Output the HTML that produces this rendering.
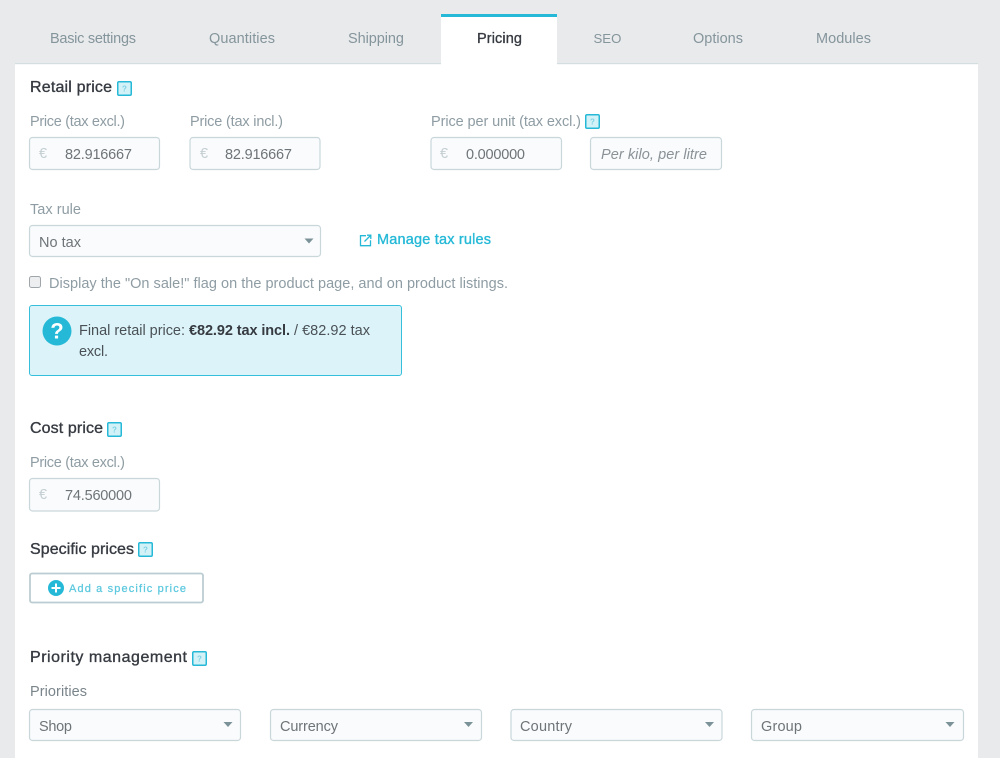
<!DOCTYPE html>
<html><head><meta charset="utf-8"><title>Pricing</title>
<style>
html,body{margin:0;padding:0;width:1000px;height:758px;overflow:hidden;background:#e9eaec}
svg{display:block;filter:blur(.3px)}
text{font-family:"Liberation Sans",sans-serif;font-size:14.5px;fill:#8a9aa0}
.tab{fill:#84959c}
.h{font-size:16px;fill:#363a41;stroke:#363a41;stroke-width:.35px}
.l{fill:#8e9ca3}
.v{fill:#6f7478}
.e{fill:#c3ced2}
.box{fill:#f9fbfc;stroke:#c9d7db;stroke-width:1.2}
.arr{fill:#7b9299}
.a{fill:#4a5156}
</style></head><body>
<svg width="1000" height="758" viewBox="0 0 1000 758" xmlns="http://www.w3.org/2000/svg">
<defs>
<g id="q"><rect x=".75" y=".75" width="13.5" height="13.5" rx="1.2" fill="#d3f2f8" stroke="#25b9d7" stroke-width="1.5"/><text x="7.5" y="10.500" text-anchor="middle" style="font-size:8px;fill:#7fd2e4;font-weight:bold">?</text></g>
</defs>
<rect x="15" y="64" width="963" height="694" fill="#fff"/>
<rect x="15" y="63" width="963" height="1.2" fill="#d3dee1"/>
<rect x="441" y="14" width="116" height="51" fill="#fff"/>
<rect x="441" y="14" width="116" height="3" fill="#25b9d7"/>

<text class="tab" x="50" y="43" textLength="86">Basic settings</text>
<text class="tab" x="209" y="43" textLength="66">Quantities</text>
<text class="tab" x="348" y="43" textLength="56">Shipping</text>
<text x="477" y="43" textLength="45" style="fill:#363a41;stroke:#363a41;stroke-width:.35px">Pricing</text>
<text class="tab" x="593.500" y="43" style="font-size:13.200px">SEO</text>
<text class="tab" x="693" y="43" textLength="50">Options</text>
<text class="tab" x="816" y="43" textLength="55">Modules</text>

<text class="h" x="30" y="92" textLength="82">Retail price</text>
<use href="#q" x="117" y="81"/>
<text class="l" x="30" y="126" textLength="95">Price (tax excl.)</text>
<text class="l" x="190" y="126" textLength="93">Price (tax incl.)</text>
<text class="l" x="431" y="126" textLength="150">Price per unit (tax excl.)</text>
<use href="#q" x="585" y="114"/>

<rect class="box" x="29.500" y="137.500" width="130" height="32" rx="3"/>
<text class="e" x="39" y="158" textLength="8">€</text>
<text class="v" x="65" y="159" textLength="67">82.916667</text>
<rect class="box" x="190" y="137.500" width="130" height="32" rx="3"/>
<text class="e" x="200" y="158" textLength="8">€</text>
<text class="v" x="225" y="159" textLength="67">82.916667</text>
<rect class="box" x="431" y="137.500" width="130.500" height="32" rx="3"/>
<text class="e" x="440" y="158" textLength="8">€</text>
<text class="v" x="466" y="159" textLength="59">0.000000</text>
<rect class="box" x="590.500" y="137.500" width="131" height="32" rx="3"/>
<text x="601" y="159" textLength="106" style="font-style:italic;fill:#8a9298">Per kilo, per litre</text>

<text class="l" x="30" y="214" textLength="51">Tax rule</text>
<rect class="box" x="29.500" y="225.500" width="291" height="31" rx="3"/>
<text class="v" x="39" y="247" textLength="42">No tax</text>
<path class="arr" d="M304.500 238.500h9l-4.500 5z"/>
<path d="M366 235.700h-5.500v10h10v-5.500M364.500 241.500l6-6M367 235.200h3.800v3.800" fill="none" stroke="#25b9d7" stroke-width="1.300"/>
<text x="377" y="244" textLength="114" style="fill:#25b9d7;stroke:#25b9d7;stroke-width:.35px">Manage tax rules</text>

<rect x="29.500" y="276.500" width="11" height="11" rx="2" fill="#eceef0" stroke="#a0a5a9"/>
<text class="l" x="49" y="288" textLength="459">Display the "On sale!" flag on the product page, and on product listings.</text>

<rect x="29.500" y="305.500" width="372" height="70" rx="2.500" fill="#dcf4f9" stroke="#35bfdb"/>
<circle cx="57" cy="331" r="14.500" fill="#25b9d7"/>
<text x="57" y="338.500" text-anchor="middle" style="font-size:22px;font-weight:bold;fill:#fff">?</text>
<text class="a" x="79" y="335" textLength="106">Final retail price:</text>
<text x="189" y="335" textLength="101" style="font-weight:bold;fill:#363a41">€82.92 tax incl.</text>
<text class="a" x="294" y="335" textLength="76">/ €82.92 tax</text>
<text class="a" x="79" y="356" textLength="29">excl.</text>

<text class="h" x="30" y="433" textLength="73">Cost price</text>
<use href="#q" x="107" y="422"/>
<text class="l" x="30" y="467" textLength="95">Price (tax excl.)</text>
<rect class="box" x="29.500" y="478.500" width="130" height="32.500" rx="3"/>
<text class="e" x="39" y="499" textLength="8">€</text>
<text class="v" x="65" y="500" textLength="67">74.560000</text>

<text class="h" x="30" y="554" textLength="104">Specific prices</text>
<use href="#q" x="138" y="542"/>
<rect x="30" y="573.500" width="173" height="29" rx="2" fill="#fff" stroke="#bbcdd2" stroke-width="1.800"/>
<circle cx="56" cy="588" r="8" fill="#25b9d7"/>
<path d="M51.500 588h9M56 583.500v9" stroke="#fff" stroke-width="2"/>
<text x="69" y="592" textLength="117" style="font-size:11px;fill:#5cc8df;stroke:#5cc8df;stroke-width:.25px">Add a specific price</text>

<text class="h" x="30" y="662" textLength="157">Priority management</text>
<use href="#q" x="192" y="651"/>
<text x="30" y="696" textLength="57" style="fill:#7a858b">Priorities</text>

<rect class="box" x="29.500" y="709.500" width="211" height="31" rx="3"/>
<text class="v" x="39" y="731" textLength="33">Shop</text>
<path class="arr" d="M223.500 722h9l-4.500 5z"/>
<rect class="box" x="270.500" y="709.500" width="211" height="31" rx="3"/>
<text class="v" x="280" y="731" textLength="58">Currency</text>
<path class="arr" d="M464 722h9l-4.500 5z"/>
<rect class="box" x="511" y="709.500" width="211" height="31" rx="3"/>
<text class="v" x="520" y="731" textLength="52">Country</text>
<path class="arr" d="M705 722h9l-4.500 5z"/>
<rect class="box" x="751.500" y="709.500" width="212" height="31" rx="3"/>
<text class="v" x="761" y="731" textLength="41">Group</text>
<path class="arr" d="M945.500 722h9l-4.500 5z"/>
</svg>
</body></html>
